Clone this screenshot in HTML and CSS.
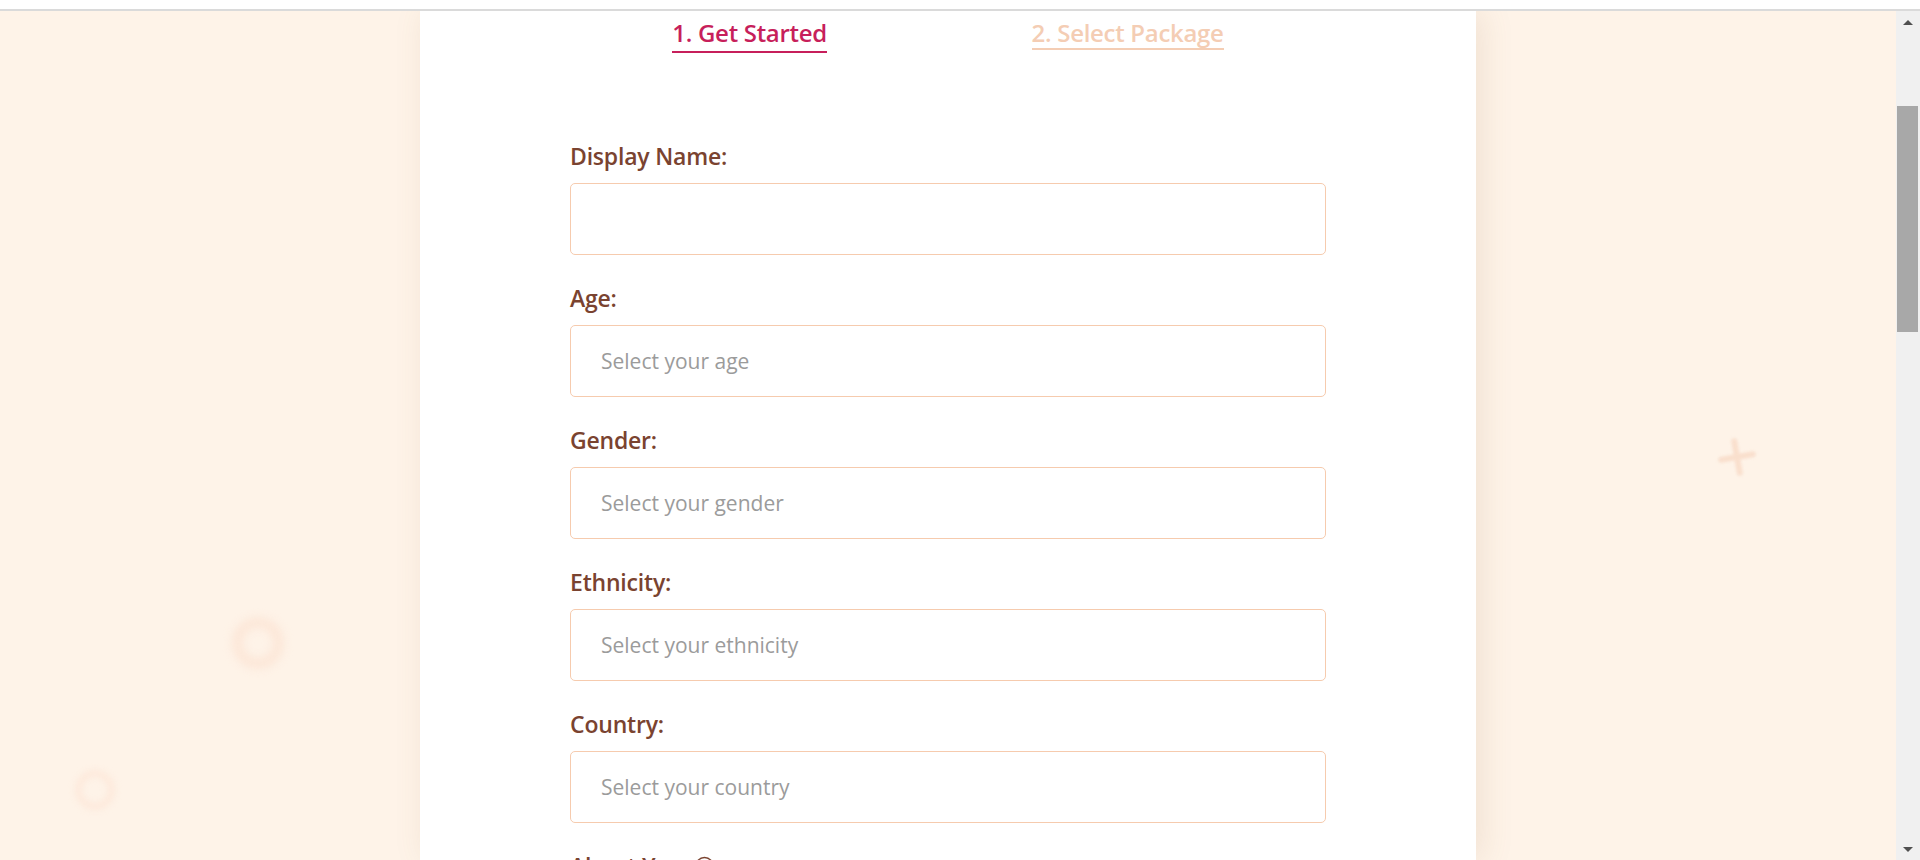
FILE: index.html
```html
<!DOCTYPE html>
<html lang="en">
<head>
  <meta charset="UTF-8">
  <title>Create Profile</title>
  <link rel="stylesheet" href="styles.css">
</head>
<body>
  <div class="topbar"></div>
  <div class="window">
    <div class="page">
      <span class="deco ring ring-big"></span>
      <span class="deco ring ring-small"></span>
      <span class="deco plus"></span>

      <div class="card">
        <div class="steps">
          <a href="#" class="step active">1. Get Started</a>
          <a href="#" class="step">2. Select Package</a>
        </div>

        <form class="profile-form">
          <div class="field">
            <label for="displayName">Display Name:</label>
            <input type="text" id="displayName">
          </div>
          <div class="field">
            <label for="age">Age:</label>
            <select id="age">
              <option value="" selected disabled>Select your age</option>
            </select>
          </div>
          <div class="field">
            <label for="gender">Gender:</label>
            <select id="gender">
              <option value="" selected disabled>Select your gender</option>
            </select>
          </div>
          <div class="field">
            <label for="ethnicity">Ethnicity:</label>
            <select id="ethnicity">
              <option value="" selected disabled>Select your ethnicity</option>
            </select>
          </div>
          <div class="field">
            <label for="country">Country:</label>
            <select id="country">
              <option value="" selected disabled>Select your country</option>
            </select>
          </div>
          <div class="field">
            <label for="about">About You
              <svg class="info" viewBox="0 0 20 20"><circle cx="10" cy="10" r="8.5" fill="none" stroke="currentColor" stroke-width="1.4"/><path d="M10 9v5M10 6.2v.1" stroke="currentColor" stroke-width="1.6" stroke-linecap="round"/></svg>
            </label>
            <textarea id="about"></textarea>
          </div>
        </form>
      </div>
    </div>

    <div class="scrollbar">
      <div class="sb-btn"><span class="arrow up"></span></div>
      <div class="sb-track"><div class="sb-thumb"></div></div>
      <div class="sb-btn"><span class="arrow down"></span></div>
    </div>
  </div>
</body>
</html>
```

FILE: styles.css
```css
:root {
  --bg: #fef3e8;
  --crimson: #c71f5b;
  --peach: #f4cdb4;
  --brown: #7a4330;
  --border: #f6cbae;
  --placeholder: #9b9b9b;
}
html, body {
  margin: 0;
  padding: 0;
  height: 100%;
  overflow: hidden;
}
body {
  font-family: 'Open Sans', 'Noto Sans', sans-serif;
  background: #fff;
  display: flex;
  flex-direction: column;
}
.topbar {
  height: 9px;
  background: #fff;
  border-bottom: 2px solid #dadada;
  flex-shrink: 0;
}
.window {
  flex: 1;
  display: flex;
  min-height: 0;
}
.page {
  flex: 1;
  position: relative;
  background: var(--bg);
  overflow: hidden;
}

/* background decorations */
.deco {
  position: absolute;
  pointer-events: none;
}
.ring {
  border-radius: 50%;
  border-style: solid;
  border-color: #fce7d8;
  filter: blur(4px);
}
.ring-big {
  left: 232px;
  top: 606px;
  width: 30px;
  height: 30px;
  border-width: 11px;
}
.ring-small {
  left: 75px;
  top: 759px;
  width: 26px;
  height: 26px;
  border-width: 7px;
  border-color: #fde9db;
  filter: blur(3px);
}
.plus {
  left: 1718px;
  top: 427px;
  width: 38px;
  height: 38px;
  transform: rotate(-10deg);
  filter: blur(1.5px);
}
.plus::before,
.plus::after {
  content: '';
  position: absolute;
  background: #f9dfcd;
  border-radius: 3px;
}
.plus::before {
  left: 0;
  right: 0;
  top: 16px;
  height: 6px;
}
.plus::after {
  top: 0;
  bottom: 0;
  left: 16px;
  width: 6px;
}

.card {
  width: 1056px;
  height: 100%;
  margin: 0 auto;
  background: #fff;
  box-shadow: 6px 0 30px rgba(150, 110, 60, 0.13);
  position: relative;
  overflow: hidden;
}
.steps {
  width: 756px;
  margin: 0 auto;
  padding-top: 6px;
  display: flex;
  justify-content: space-around;
  align-items: flex-start;
}
.step {
  font-size: 24px;
  font-weight: 600;
  line-height: 31px;
  text-decoration: none;
  color: var(--peach);
  border-bottom: 2px solid var(--peach);
  letter-spacing: -0.3px;
}
.step.active {
  color: var(--crimson);
  border-bottom-color: var(--crimson);
  padding-bottom: 3px;
}

.profile-form {
  width: 756px;
  margin: 88px auto 0;
}
.field {
  margin-bottom: 28px;
}
.field label {
  display: flex;
  align-items: center;
  gap: 10px;
  font-size: 23px;
  font-weight: 600;
  line-height: 31px;
  color: var(--brown);
  margin-bottom: 11px;
  letter-spacing: -0.2px;
}
.info {
  width: 21px;
  height: 21px;
  color: var(--brown);
}
.field input,
.field select,
.field textarea {
  display: block;
  width: 100%;
  height: 72px;
  box-sizing: border-box;
  border: 1px solid var(--border);
  border-radius: 5px;
  padding: 0 30px;
  font-family: inherit;
  font-size: 21px;
  color: var(--placeholder);
  background: #fff;
  outline: none;
  appearance: none;
  -webkit-appearance: none;
}
.field textarea {
  height: 160px;
  resize: none;
}

/* fake scrollbar to match the captured window */
.scrollbar {
  width: 24px;
  flex-shrink: 0;
  background: #f0f0f0;
  display: flex;
  flex-direction: column;
}
.sb-btn {
  height: 22px;
  display: flex;
  justify-content: center;
  align-items: center;
}
.arrow {
  width: 0;
  height: 0;
  border-left: 5px solid transparent;
  border-right: 5px solid transparent;
}
.arrow.up {
  border-bottom: 5px solid #505050;
}
.arrow.down {
  border-top: 5px solid #505050;
}
.sb-track {
  flex: 1;
  padding: 0 2px 0 1px;
}
.sb-thumb {
  margin-top: 73px;
  height: 226px;
  background: #a8a8a8;
}
```
